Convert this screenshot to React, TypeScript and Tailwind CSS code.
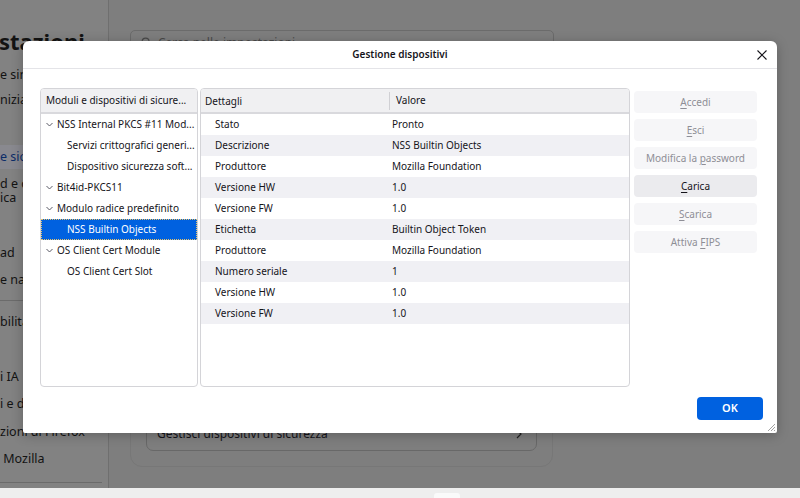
import React from 'react'

const TREE = [
  { label: 'NSS Internal PKCS #11 Mod...', child: false },
  { label: 'Servizi crittografici generi...', child: true },
  { label: 'Dispositivo sicurezza soft...', child: true },
  { label: 'Bit4id-PKCS11', child: false },
  { label: 'Modulo radice predefinito', child: false },
  { label: 'NSS Builtin Objects', child: true, selected: true },
  { label: 'OS Client Cert Module', child: false },
  { label: 'OS Client Cert Slot', child: true },
]

const DETAILS = [
  ['Stato', 'Pronto'],
  ['Descrizione', 'NSS Builtin Objects'],
  ['Produttore', 'Mozilla Foundation'],
  ['Versione HW', '1.0'],
  ['Versione FW', '1.0'],
  ['Etichetta', 'Builtin Object Token'],
  ['Produttore', 'Mozilla Foundation'],
  ['Numero seriale', '1'],
  ['Versione HW', '1.0'],
  ['Versione FW', '1.0'],
]

const BUTTONS = [
  { pre: '', key: 'A', post: 'ccedi', enabled: false },
  { pre: '', key: 'E', post: 'sci', enabled: false },
  { pre: 'Modifica la ', key: 'p', post: 'assword', enabled: false },
  { pre: '', key: 'C', post: 'arica', enabled: true },
  { pre: '', key: 'S', post: 'carica', enabled: false },
  { pre: 'Attiva ', key: 'F', post: 'IPS', enabled: false },
]

// sidebar of the settings page behind the dialog (only the tails show)
const SIDEBAR = [
  { text: 'e sincronizzazione', h: 'h-[26px]' },
  { text: 'niziale', h: 'h-[24px]' },
  { text: '', h: 'h-[33px]' },
  { text: 'e sicurezza', h: 'h-[24px]', active: true },
  { text: 'd e cronologia', text2: 'ica', h: 'h-[44px]' },
  { text: '', h: 'h-[27px]' },
  { text: 'ad', h: 'h-[26px]' },
  { text: 'e navigazione', h: 'h-[28px]' },
]

const SIDEBAR2 = [
  { text: 'bilità', h: 'h-[30px]' },
  { text: '', h: 'h-[26px]' },
  { text: 'i IA', h: 'h-[28px]' },
  { text: 'i e dati', h: 'h-[26px]' },
  { text: 'zioni di Firefox', h: 'h-[30px]' },
  { text: ' Mozilla', h: 'h-[24px]' },
]

function Chevron() {
  return (
    <svg width="7" height="5" viewBox="0 0 7 5" className="shrink-0">
      <path d="M0.5 1 L3.5 4 L6.5 1" fill="none" stroke="#5b5b66" strokeWidth="1" />
    </svg>
  )
}

export default function App() {
  return (
    <div className="relative w-[800px] h-[498px] overflow-hidden font-['Noto_Sans',sans-serif] text-[#15141a]">
      {/* dimmed settings page */}
      <div className="flex h-[488px] bg-[#7e7e7e]">
        <aside className="w-[109px] shrink-0 bg-[#828282] border-r border-[#6f6f6f] overflow-hidden text-[12.5px] text-[#131313]">
          <div className="pt-[27px] h-[55px] text-[22px] leading-[28px] font-bold -ml-px whitespace-nowrap">stazioni</div>
          <div className="mt-[7px]">
            {SIDEBAR.map((s, i) => (
              <div
                key={i}
                className={`${s.h} flex flex-col justify-center whitespace-nowrap leading-[14px] ${
                  s.active ? 'bg-[#89898f] text-[#0b2c68]' : ''
                }`}
              >
                <span>{s.text}</span>
                {s.text2 && <span>{s.text2}</span>}
              </div>
            ))}
            <div className="my-[6px] h-px w-[100px] bg-[#6b6b6b]" />
            {SIDEBAR2.map((s, i) => (
              <div key={i} className={`${s.h} flex items-center whitespace-pre leading-[14px]`}>
                {s.text}
              </div>
            ))}
            <div className="mt-[11px] h-px w-[102px] bg-[#6b6b6b]" />
          </div>
        </aside>

        <main className="flex-1 pl-[21px] pt-[30px]">
          <div className="w-[424px] h-[25px] rounded-[5px] border border-[#6b6b6b] flex items-center gap-[6px] pl-[10px] text-[12px] text-[#4a4a4a]">
            <svg width="11" height="11" viewBox="0 0 12 12">
              <circle cx="5" cy="5" r="3.8" fill="none" stroke="#4a4a4a" strokeWidth="1.2" />
              <path d="M8 8 L11 11" stroke="#4a4a4a" strokeWidth="1.2" />
            </svg>
            Cerca nelle impostazioni
          </div>
          <div className="mt-[275px] w-[423px] h-[137px] rounded-[12px] border border-[#777777] flex flex-col justify-end px-[15px] pb-[15px]">
            <div className="h-[34px] rounded-[7px] border border-[#686868] flex items-center justify-between pl-[10px] pr-[14px] text-[12px]">
              <span>Gestisci dispositivi di sicurezza</span>
              <svg width="6" height="10" viewBox="0 0 6 10">
                <path d="M1 1 L5 5 L1 9" fill="none" stroke="#222" strokeWidth="1.2" />
              </svg>
            </div>
          </div>
        </main>
      </div>
      <div className="h-[10px] bg-[#eeeeee] pl-[434px] pt-[5px]">
        <div className="w-[26px] h-[5px] rounded-t-[3px] bg-[#fafafa]" />
      </div>

      {/* dialog */}
      <div className="absolute left-[23px] top-[41px] w-[754px] h-[392px] bg-white rounded-t-[6px] rounded-b-[2px] shadow-[0_2px_12px_rgba(0,0,0,0.25)] flex flex-col text-[10px]">
        <div className="relative h-[28px] shrink-0 border-b border-[#e4e4e8] flex items-center justify-center">
          <span className="text-[10px] font-semibold">Gestione dispositivi</span>
          <svg className="absolute right-[10px] top-[9px]" width="10" height="10" viewBox="0 0 10 10">
            <path d="M0.5 0.5 L9.5 9.5 M9.5 0.5 L0.5 9.5" stroke="#15141a" strokeWidth="1.1" />
          </svg>
        </div>

        <div className="flex pl-[17px] pt-[19px]">
          {/* tree */}
          <div className="w-[158px] h-[299px] rounded-[4px] border border-[#d4d4d8] overflow-hidden">
            <div className="h-[25px] bg-[#f0f0f2] border-b-2 border-[#d9d9dd] flex items-center pl-[5px] whitespace-nowrap">
              Moduli e dispositivi di sicure...
            </div>
            {TREE.map((t, i) => (
              <div
                key={i}
                className={`h-[21px] flex items-center gap-[4px] whitespace-nowrap ${
                  t.child ? 'pl-[26px]' : 'pl-[5px]'
                } ${t.selected ? 'bg-[#0061e0] text-white outline-1 outline-dotted outline-[#e8c36a] -outline-offset-1' : ''}`}
              >
                {!t.child && <Chevron />}
                <span>{t.label}</span>
              </div>
            ))}
          </div>

          {/* details table */}
          <div className="ml-[2px] w-[430px] h-[299px] rounded-[4px] border border-[#d4d4d8] overflow-hidden">
            <div className="h-[25px] bg-[#f0f0f2] border-b-2 border-[#d9d9dd] flex items-center">
              <span className="w-[189px] pl-[4px] border-r border-[#d0d0d4] leading-[18px]">Dettagli</span>
              <span className="pl-[6px]">Valore</span>
            </div>
            {DETAILS.map(([k, v], i) => (
              <div key={i} className={`h-[21px] flex items-center ${i % 2 === 1 ? 'bg-[#f0f0f4]' : ''}`}>
                <span className="w-[191px] pl-[14px]">{k}</span>
                <span>{v}</span>
              </div>
            ))}
          </div>

          {/* action buttons */}
          <div className="ml-[4px] mt-[3px] w-[123px] flex flex-col gap-[6px]">
            {BUTTONS.map((b, i) => (
              <div
                key={i}
                className={`h-[22px] rounded-[4px] flex items-center justify-center ${
                  b.enabled ? 'bg-[#ebebee] text-[#15141a]' : 'bg-[#f6f6f8] text-[#8e8e96]'
                }`}
              >
                <span className="whitespace-pre">
                  {b.pre}
                  <u className="decoration-1 underline-offset-[2px]">{b.key}</u>
                  {b.post}
                </span>
              </div>
            ))}
          </div>
        </div>

        <div className="flex justify-end pr-[14px] pt-[10px]">
          <div className="w-[66px] h-[23px] rounded-[4px] bg-[#0061e0] text-white font-semibold text-[11px] flex items-center justify-center">
            OK
          </div>
        </div>

        <svg className="absolute right-px bottom-px" width="10" height="10" viewBox="0 0 10 10">
          <path d="M9 2 L2 9 M9 5 L5 9 M9 8 L8 9" stroke="#8a8a8a" strokeWidth="0.8" />
        </svg>
      </div>
    </div>
  )
}
